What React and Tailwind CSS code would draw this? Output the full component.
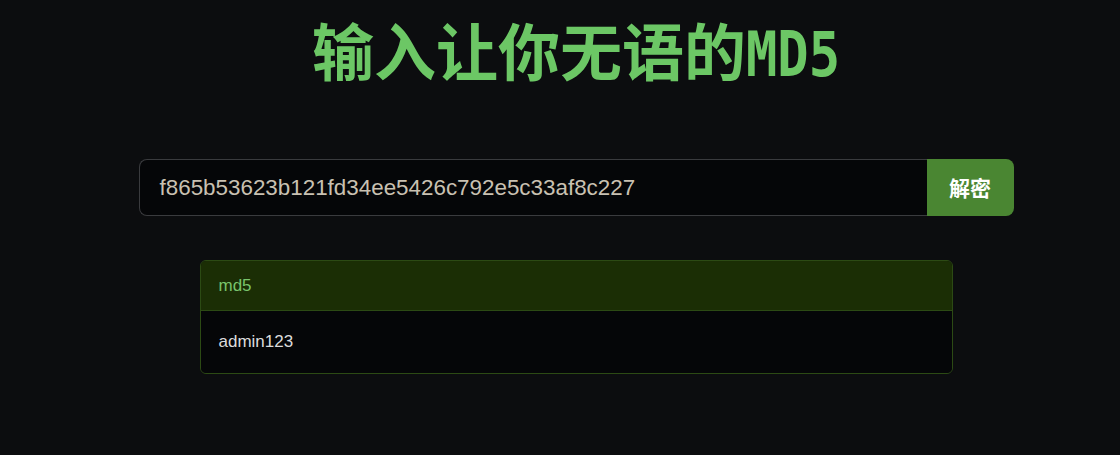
export default function App() {
  return (
    <div
      className="min-h-[455px] bg-[#0c0d0f] pl-[32px] pt-[12px]"
      style={{ fontFamily: '"Liberation Sans", "Noto Sans CJK SC", sans-serif' }}
    >
      {/* 标题 */}
      <h1 className="text-center text-[62px] leading-[74px] font-bold text-[#6cc765] [font-family:'Noto_Sans_CJK_SC',sans-serif]">
        输入让你无语的
        <span className="inline-block origin-left scale-x-[0.84] -mr-[18px] [font-family:'DejaVu_Sans_Mono',monospace] text-[62px]">
          MD5
        </span>
      </h1>

      {/* 输入框 */}
      <div className="mx-auto mt-[67px] flex h-[57px] w-[875px]">
        <div className="flex flex-1 items-center rounded-l-lg border border-r-0 border-[#3a3b3e] bg-[#050608] pl-[20px] text-[22.4px] text-[#c9c1b2]">
          f865b53623b121fd34ee5426c792e5c33af8c227
        </div>
        <button className="w-[87px] rounded-r-lg bg-[#4a8632] text-[21px] font-bold text-white [font-family:'Noto_Sans_CJK_SC',sans-serif]">
          解密
        </button>
      </div>

      {/* 结果 */}
      <div className="mx-auto mt-[44px] w-[753px] overflow-hidden rounded-md border border-[#2c4a14]">
        <div className="flex h-[50px] items-center border-b border-[#2c4a14] bg-[#1b2e05] px-[18px] text-[17px] text-[#79c46b]">
          md5
        </div>
        <div className="flex h-[62px] items-center bg-[#050608] px-[18px] text-[17px] text-[#dcdcdc]">
          admin123
        </div>
      </div>
    </div>
  )
}
